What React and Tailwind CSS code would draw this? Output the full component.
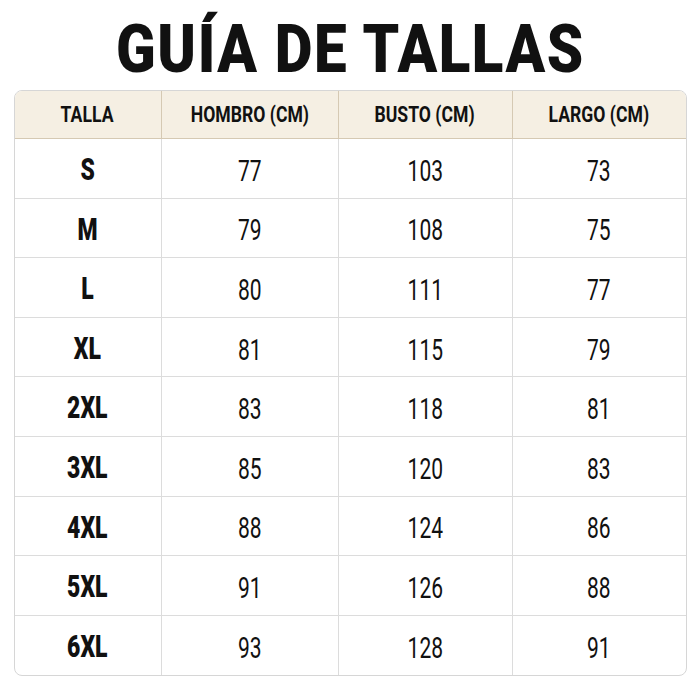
import React from "react";

const rows = [
  ["S", "77", "103", "73"],
  ["M", "79", "108", "75"],
  ["L", "80", "111", "77"],
  ["XL", "81", "115", "79"],
  ["2XL", "83", "118", "81"],
  ["3XL", "85", "120", "83"],
  ["4XL", "88", "124", "86"],
  ["5XL", "91", "126", "88"],
  ["6XL", "93", "128", "91"],
];

const heads = ["TALLA", "HOMBRO (CM)", "BUSTO (CM)", "LARGO (CM)"];

export default function App() {
  return (
    <div
      className="w-[700px] h-[700px] bg-white flex flex-col items-center"
      style={{ fontFamily: 'Roboto, "DejaVu Sans Condensed", sans-serif' }}
    >
      <h1 className="h-[90px] pt-[8px] flex items-center justify-center text-[67px] font-black leading-none text-[#111]">
        <span className="inline-block scale-x-[0.87] tracking-[1.8px] whitespace-nowrap">GUÍA DE TALLAS</span>
      </h1>
      <div className="w-[673px] rounded-[8px] border border-[#d6d6d6] overflow-hidden grid grid-cols-[147px_177px_174px_1fr]">
        {heads.map((h, i) => (
          <div
            key={h}
            className={`h-[48px] bg-[#f5efe3] border-b border-[#d5c9b3] flex items-center justify-center text-[22px] font-bold text-[#111] ${i < 3 ? "border-r" : ""}`}
          >
            <span className="inline-block scale-x-[0.8] whitespace-nowrap">{h}</span>
          </div>
        ))}
        {rows.map((r, ri) =>
          r.map((c, ci) => (
            <div
              key={ri + "-" + ci}
              className={`h-[59.6px] pt-[4px] flex items-center justify-center text-[#111] border-[#dcdcdc] ${ci < 3 ? "border-r" : ""} ${ri < rows.length - 1 ? "border-b" : ""} ${ci === 0 ? "text-[31px] font-black" : "text-[30px] font-normal"}`}
            >
              <span className={`inline-block whitespace-nowrap ${ci === 0 ? "scale-x-[0.74]" : "scale-x-[0.7]"}`}>{c}</span>
            </div>
          ))
        )}
      </div>
    </div>
  );
}
